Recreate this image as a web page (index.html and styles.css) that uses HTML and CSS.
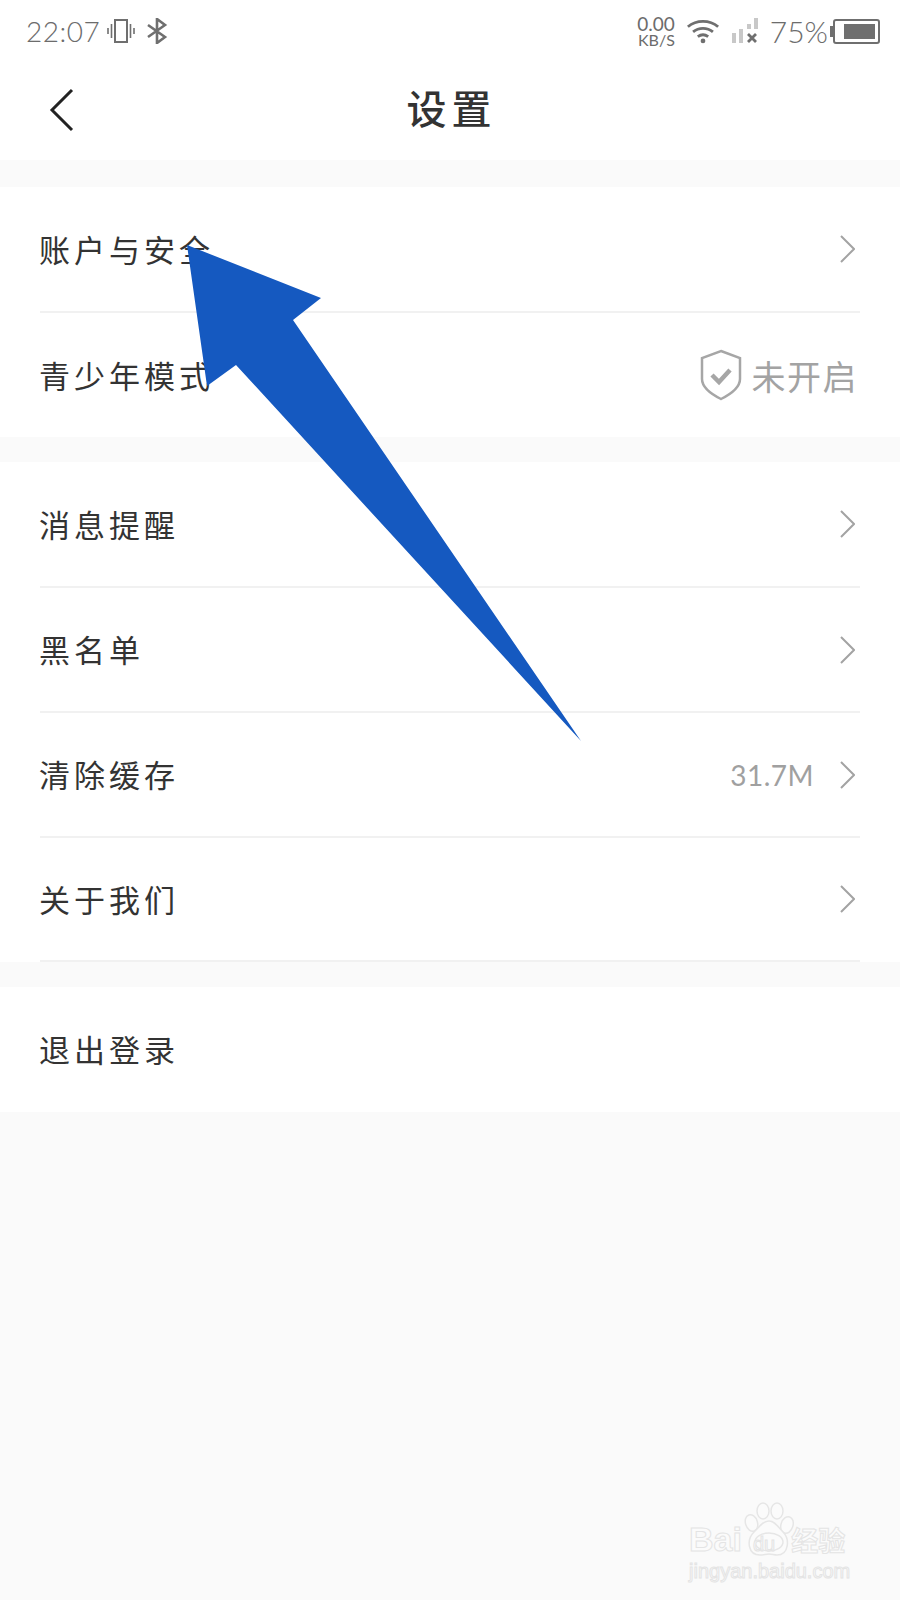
FILE: index.html
```html
<!DOCTYPE html>
<html>
<head>
    <title>设置</title>
    <link rel="stylesheet" href="styles.css">
</head>
<body>
    <div class="page">
        <div class="statusBar">
            <div class="statusLeft">
                <span class="clock">22:07</span>
                <svg class="vibrate" width="28" height="24" viewBox="0 0 28 24" fill="none" stroke="#6f6f6f">
                    <rect x="8" y="1" width="12" height="22" stroke-width="2"/>
                    <path d="M4.500 5v14M23.500 5v14" stroke-width="1.600"/>
                    <path d="M1 9v6M27 9v6" stroke-width="1.600"/>
                </svg>
                <svg class="bluetooth" width="22" height="26" viewBox="0 0 22 26" fill="none" stroke="#6f6f6f" stroke-width="2.600">
                    <path d="M2 7l17 12-8 6V1l8 6L2 19"/>
                </svg>
            </div>
            <div class="statusRight">
                <div class="speed">
                    <span class="speedNum">0.00</span>
                    <span class="speedUnit">KB/S</span>
                </div>
                <svg class="wifi" width="34" height="26" viewBox="0 0 36 26" fill="none" stroke="#6f6f6f" stroke-width="3">
                    <path d="M2 8.500C11 1 25 1 34 8.500"/>
                    <path d="M7.500 14C13.500 9 22.500 9 28.500 14"/>
                    <path d="M12.500 19C16 16.500 20 16.500 23.500 19"/>
                    <circle cx="18" cy="23.500" r="2.500" fill="#6f6f6f" stroke="none"/>
                </svg>
                <svg class="signal" width="28" height="26" viewBox="0 0 28 26">
                    <rect x="1" y="15" width="4" height="10" fill="#c8c8c8"/>
                    <rect x="8" y="11" width="4" height="14" fill="#c8c8c8"/>
                    <rect x="16" y="6" width="4" height="5" fill="#c8c8c8"/>
                    <rect x="23" y="0" width="4" height="11" fill="#c8c8c8"/>
                    <path d="M17 16l8 8M25 16l-8 8" stroke="#6f6f6f" stroke-width="2.800"/>
                </svg>
                <span class="percent">75%</span>
                <div class="battery">
                    <div class="batteryFill"></div>
                </div>
            </div>
        </div>

        <div class="navBar">
            <svg class="backIcon" width="26" height="44" viewBox="0 0 26 44" fill="none" stroke="#222" stroke-width="3">
                <path d="M23 2L3 22l20 20"/>
            </svg>
            <h2 class="navTitle">设置</h2>
        </div>

        <div class="group groupFirst">
            <div class="row">
                <span class="rowLabel">账户与安全</span>
                <svg class="chevron" width="16" height="28" viewBox="0 0 16 28" fill="none" stroke="#a3a3a3" stroke-width="2"><path d="M2 1l13 13L2 27"/></svg>
            </div>
            <div class="row rowEnd">
                <span class="rowLabel">青少年模式</span>
                <div class="rowValue">
                    <svg class="shield" width="42" height="52" viewBox="0 0 42 52" fill="none" stroke="#a6a6a6" stroke-width="2.500">
                        <path d="M21 2L40 9v21c0 8-9 15-19 20C11 45 2 38 2 30V9z"/>
                        <path d="M12 26l7 7 11-12" stroke-width="4.500"/>
                    </svg>
                    <span class="statusText">未开启</span>
                </div>
            </div>
        </div>

        <div class="group">
            <div class="row">
                <span class="rowLabel">消息提醒</span>
                <svg class="chevron" width="16" height="28" viewBox="0 0 16 28" fill="none" stroke="#a3a3a3" stroke-width="2"><path d="M2 1l13 13L2 27"/></svg>
            </div>
            <div class="row">
                <span class="rowLabel">黑名单</span>
                <svg class="chevron" width="16" height="28" viewBox="0 0 16 28" fill="none" stroke="#a3a3a3" stroke-width="2"><path d="M2 1l13 13L2 27"/></svg>
            </div>
            <div class="row">
                <span class="rowLabel">清除缓存</span>
                <div class="rowValue">
                    <span class="cacheSize">31.7M</span>
                    <svg class="chevron" width="16" height="28" viewBox="0 0 16 28" fill="none" stroke="#a3a3a3" stroke-width="2"><path d="M2 1l13 13L2 27"/></svg>
                </div>
            </div>
            <div class="row rowLined">
                <span class="rowLabel">关于我们</span>
                <svg class="chevron" width="16" height="28" viewBox="0 0 16 28" fill="none" stroke="#a3a3a3" stroke-width="2"><path d="M2 1l13 13L2 27"/></svg>
            </div>
        </div>

        <div class="group">
            <div class="row rowEnd rowSingle">
                <span class="rowLabel">退出登录</span>
            </div>
        </div>

        <!-- Annotation arrow drawn over the list -->
        <svg class="arrow" width="900" height="800" viewBox="0 0 900 800">
            <polygon points="187,245 321,298 293,320 581,741 236,365 207,386" fill="#1559c0"/>
        </svg>

        <!-- Watermark -->
        <div class="watermark">
            <svg class="paw" width="50" height="54" viewBox="0 0 50 54" fill="#fbfbfb" stroke="#e6e6e6" stroke-width="1.500">
                <ellipse cx="7.500" cy="21" rx="6" ry="8.500" transform="rotate(-18 7.500 21)"/>
                <ellipse cx="19" cy="9" rx="6" ry="8"/>
                <ellipse cx="33" cy="9" rx="6" ry="8"/>
                <ellipse cx="43" cy="23" rx="6" ry="8.500" transform="rotate(18 43 23)"/>
                <path d="M25 19c6 0 9 6 14 11 7 7 6 23-6 23-3 0-5-1-8-1s-5 1-9 1C4 53 2 38 10 30c5-5 9-11 15-11z"/>
                <ellipse cx="25" cy="40" rx="14" ry="9"/>
            </svg>
            <div class="wmLogo">
                <span class="wmBai">Bai</span>
                <span class="wmDu">du</span>
                <span class="wmCn">经验</span>
            </div>
            <div class="wmUrl">jingyan.baidu.com</div>
        </div>
    </div>
</body>
</html>
```

FILE: styles.css
```css
html, body {
    margin: 0;
    padding: 0;
}

body {
    font-family: "Noto Sans CJK SC", "Noto Sans", sans-serif;
    background-color: #fafafa;
}

.page {
    position: relative;
    width: 900px;
    height: 1600px;
    overflow: hidden;
    background-color: #fafafa;
}

.statusBar {
    display: flex;
    justify-content: space-between;
    align-items: center;
    height: 62px;
    padding: 0 20px 0 26px;
    background-color: #fff;
    color: #6c6c6c;
    font-family: Lato, sans-serif;
}

.statusLeft,
.statusRight {
    display: flex;
    align-items: center;
}

.clock {
    font-size: 28px;
    font-weight: 300;
    letter-spacing: 0.5px;
}

.vibrate {
    margin-left: 7px;
}

.bluetooth {
    margin-left: 11px;
}

.speed {
    display: flex;
    flex-direction: column;
    align-items: flex-end;
}

.speedNum {
    font-size: 19px;
    line-height: 17px;
}

.speedUnit {
    font-size: 16px;
    line-height: 15px;
}

.wifi {
    margin-left: 11px;
}

.signal {
    margin-left: 11px;
}

.percent {
    margin-left: 11px;
    font-size: 30px;
    font-weight: 300;
}

.battery {
    position: relative;
    box-sizing: border-box;
    width: 47px;
    height: 25px;
    margin-left: 5px;
    padding: 3px 3px 3px 9px;
    border: 2px solid #6f6f6f;
    border-radius: 3px;
}

.battery::before {
    content: "";
    position: absolute;
    left: -5px;
    top: 5px;
    width: 3px;
    height: 11px;
    background-color: #6f6f6f;
}

.batteryFill {
    height: 100%;
    background-color: #6f6f6f;
}

.navBar {
    position: relative;
    display: flex;
    justify-content: center;
    align-items: center;
    box-sizing: border-box;
    height: 98px;
    padding: 0 0 8px 3px;
    background-color: #fff;
}

.backIcon {
    position: absolute;
    left: 49px;
    top: 26px;
}

.navTitle {
    margin: 0;
    font-size: 40px;
    font-weight: 500;
    letter-spacing: 5px;
    color: #333;
}

.group {
    margin-top: 25px;
    background-color: #fff;
}

.groupFirst {
    margin-top: 27px;
}

.row {
    display: flex;
    justify-content: space-between;
    align-items: center;
    box-sizing: border-box;
    height: 125px;
    margin: 0 40px;
    padding-right: 5px;
    border-bottom: 2px solid #f1f1f1;
}

.row:first-child {
    height: 126px;
}

.rowLined {
    height: 124px;
}

.rowEnd {
    height: 124px;
    border-bottom: none;
}

.rowSingle:first-child {
    height: 125px;
}

.rowLabel {
    margin: 0 0 2px -1px;
    font-size: 31px;
    letter-spacing: 4px;
    color: #333;
}

.rowValue {
    display: flex;
    align-items: center;
}

.shield {
    margin-right: 10px;
}

.statusText {
    margin-right: -3px;
    font-size: 34px;
    letter-spacing: 1.500px;
    color: #a3a3a3;
}

.cacheSize {
    margin-right: 25px;
    font-family: Lato, sans-serif;
    font-size: 28px;
    font-weight: 400;
    letter-spacing: 0.500px;
    color: #a0a0a0;
}

.arrow {
    position: absolute;
    left: 0;
    top: 0;
}

.watermark {
    position: absolute;
    left: 689px;
    top: 1502px;
    width: 170px;
    color: #fbfbfb;
    -webkit-text-stroke: 1px #e4e4e4;
}

.paw {
    position: absolute;
    left: 55px;
    top: 0;
}

.wmLogo {
    position: relative;
    display: flex;
    align-items: baseline;
    box-sizing: border-box;
    height: 58px;
    padding-top: 18px;
    font-family: "Liberation Sans", sans-serif;
    font-weight: 700;
}

.wmBai {
    font-size: 34px;
    line-height: 38px;
}

.wmDu {
    margin-left: 11px;
    font-size: 20px;
    font-weight: 400;
    color: #fbfbfb;
}

.wmCn {
    margin-left: 16px;
    font-family: "Noto Sans CJK SC", sans-serif;
    font-size: 27px;
}

.wmUrl {
    font-family: "Liberation Sans", sans-serif;
    font-size: 20px;
    line-height: 22px;
    white-space: nowrap;
}
```
